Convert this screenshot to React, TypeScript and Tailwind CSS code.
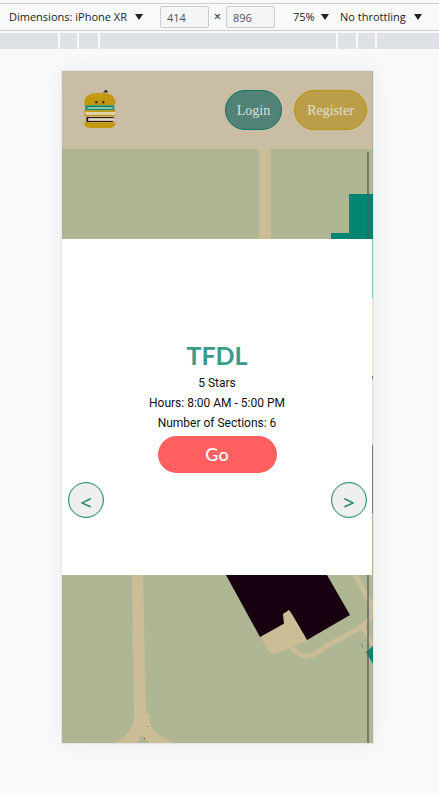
import React from "react";

function ToolbarSelect({ label, value, className }: { label: string; value: string; className: string }) {
  return (
    <div className={`flex shrink-0 items-center gap-1 ${className}`}>
      <select aria-label={label} className="min-w-0 flex-1 appearance-none bg-transparent p-0 leading-5 outline-none">
        <option>{value}</option>
      </select>
      <svg className="w-2 shrink-0" viewBox="0 0 8 8" aria-hidden="true">
        <path d="M0 1h8L4 7z" fill="#202124" />
      </svg>
    </div>
  );
}

function SizeInput({ label, value }: { label: string; value: string }) {
  return (
    <input
      aria-label={label}
      defaultValue={value}
      className="h-[22px] w-[49px] shrink-0 rounded-xs border border-[#c9cbcd] bg-[#f4f5f5] px-1.5 text-[#505356] outline-none"
    />
  );
}

function DeviceToolbar() {
  return (
    <div className="mt-[3px] mb-0.5 flex h-7 items-center border-y border-[#cacdd1] pl-[9px] font-['Open_Sans','Noto_Sans',sans-serif] text-[11px] text-[#202124]">
      <ToolbarSelect label="Device" value="Dimensions: iPhone XR" className="mr-[17px] w-[134px]" />
      <SizeInput label="Width" value="414" />
      <span className="w-[17px] shrink-0 text-center text-[13px]">×</span>
      <SizeInput label="Height" value="896" />
      <ToolbarSelect label="Zoom" value="75%" className="mr-[11px] ml-[18px] w-9" />
      <ToolbarSelect label="Throttling" value="No throttling" className="w-[82px]" />
    </div>
  );
}

function Ruler() {
  return (
    <div className="flex h-4 gap-0.5">
      <div className="w-[58px] bg-[#dee1e6]" />
      <div className="w-[17px] bg-[#dee1e6]" />
      <div className="w-[19px] bg-[#dee1e6]" />
      <div className="flex-1 bg-[#dee1e6]" />
      <div className="w-[18px] bg-[#dee1e6]" />
      <div className="w-[17px] bg-[#dee1e6]" />
      <div className="w-[62px] bg-[#dee1e6]" />
    </div>
  );
}

function BurgerLogo() {
  return (
    <svg className="mb-0.5 h-10 w-8" viewBox="86 80 96 120" role="img" aria-label="Burger">
      <path d="M144 93l5-8" stroke="#30151f" strokeWidth="2" />
      <path d="M148 86l3-4 3 3 4 1-2 4-7 1z" fill="#30151f" />
      <path d="M87 129v-10c0-16 16-27 35-27h22c21 0 36 11 36 27v4l-4 6z" fill="#c49710" />
      <path d="M108 103h3M118 97h3M126 104h3M137 98h3M149 103h3M113 99h2M132 97h2" stroke="#dfc273" strokeWidth="2" />
      <path d="M120 117h6v6h-6zM141 117h6v6h-6z" fill="#21131b" />
      <path d="M127 125h2M137 125h2" stroke="#7c4a20" strokeWidth="2" />
      <path d="M90 129h87v15H90z" fill="#058a72" />
      <path d="M96 135h77v4H96z" fill="#d6dfb9" />
      <path d="M87 144h93v5H87zM87 157h93v5H87zM87 144h4v18h-4z" fill="#c49710" />
      <path d="M91 149h89v8H91z" fill="#e0d4ae" />
      <path d="M93 164h82v4H93zM93 175h80v4H93zM93 164h6v15h-6z" fill="#30151f" />
      <path d="M99 168h75v7H99z" fill="#ded6c0" />
      <path d="M87 180h93v3c0 9-6 14-16 14h-61c-10 0-16-5-16-14z" fill="#c49710" />
    </svg>
  );
}

function CampusMap() {
  return (
    <svg
      className="absolute inset-0 h-full w-full"
      viewBox="0 0 311 672"
      preserveAspectRatio="xMaxYMid slice"
      aria-hidden="true"
    >
      <path d="M0 0h311v672H0z" fill="#aeb694" />
      <path d="M197 70h12v98h-12z" fill="#cbbd96" />
      <path d="M269 168v-6h18v-39h24v45z" fill="#008672" />
      <path d="M310 168h1v59h-1z" fill="#7fcdbf" />
      <path d="M310 227h1v80h-1zM310 424h1v20h-1z" fill="#f2e6d2" />
      <path d="M310 307h1v117h-1z" fill="#dfe2d2" />
      <path d="M310 305h1v3h-1zM310 374h1v69h-1z" fill="#77797c" />
      <path
        d="M70 504h11l3 138 3 1 1 9c3 9 14 17 27 20H87l-7-8-5 8H51c12-4 21-14 21-28z"
        fill="#cbbd96"
      />
      <path d="M85 655h1v1h-1z" fill="#7b6938" />
      <path d="M82 667h1v1h-1z" fill="#a0202a" />
      <path
        d="M230 576C239 590 251 586 263 576C274 570 292 561 300 555C311 548 312 538 307 529L292 502M300 555L312 575"
        fill="none"
        stroke="#cbbd96"
        strokeWidth="5"
      />
      <path d="M198 565l10 17 5 1 15-6 17-8-18-30-6 4 3 8z" fill="#cbbd96" />
      <path d="M164 504h101l23 40-43 25-17-29-6 3 3 8-27 15z" fill="#17000f" />
      <path d="M227 539l19 30-12 4-12-20-1-10z" fill="#cbbd96" />
      <path d="M228 539l17 30 6-4-17-30z" fill="#17000f" />
      <path d="M304 581l7-6v18z" fill="#008672" />
      <path d="M300 575h1v1h-1zM299 573h1v1h-1z" fill="#17826e" />
      <path d="M305 81h2v591h-2z" fill="#555b58" fillOpacity=".65" />
    </svg>
  );
}

const details = ["5 Stars", "Hours: 8:00 AM - 5:00 PM", "Number of Sections: 6"];

function RoundButton({ label, children }: { label: string; children: React.ReactNode }) {
  return (
    <button
      aria-label={label}
      className="size-9 rounded-full border-[1px] border-[#2a8d79] bg-[#efefef] pt-1 text-center text-[20px] leading-8 font-semibold text-[#2a8d79] shadow-[inset_0_0_1px_#2a8d79]"
    >
      {children}
    </button>
  );
}

function Phone() {
  return (
    <main className="relative flex flex-col bg-[#aeb694] pb-[168px] shadow-[0_0_0_1px_#e4e7e9,0_0_20px_rgba(0,0,0,0.06)]">
      <CampusMap />
      <header className="relative mr-px flex h-[78px] items-center justify-between bg-[#c9bea4] pr-[5px] pl-[22px] font-['Liberation_Serif',serif] text-[14px] text-[#dfe0dd]">
        <BurgerLogo />
        <nav className="flex gap-3">
          <button className="h-10 w-[57px] rounded-full border border-[#0b7566] bg-[#508276]">Login</button>
          <button className="h-10 w-[73px] rounded-full border border-[#b99212] bg-[#bc9e48]">Register</button>
        </nav>
      </header>
      <section className="relative mt-[90px] mr-px flex flex-col items-center bg-white pt-[100px] pb-[57px] font-[Roboto,sans-serif] text-[12px] text-[#111111]">
        <h1 className="mb-0.5 font-[Lato,sans-serif] text-[25px] leading-8 font-bold text-[#3c9a88]">TFDL</h1>
        {details.map((line) => (
          <p key={line} className="leading-5">
            {line}
          </p>
        ))}
        <button className="mt-[3px] h-[37px] w-[119px] rounded-full bg-[#ff5f5f] font-[Lato,sans-serif] text-[18px] font-medium text-white">
          Go
        </button>
        <div className="mt-[9px] flex w-full justify-between pr-[5px] pl-1.5 font-['Open_Sans',sans-serif]">
          <RoundButton label="Previous">&lt;</RoundButton>
          <RoundButton label="Next">&gt;</RoundButton>
        </div>
      </section>
    </main>
  );
}

export default function App() {
  return (
    <div className="flex min-h-screen flex-col bg-[#f8faf9]">
      <DeviceToolbar />
      <Ruler />
      <div className="pt-[22px] pr-[66px] pb-[50px] pl-[62px]">
        <Phone />
      </div>
    </div>
  );
}
